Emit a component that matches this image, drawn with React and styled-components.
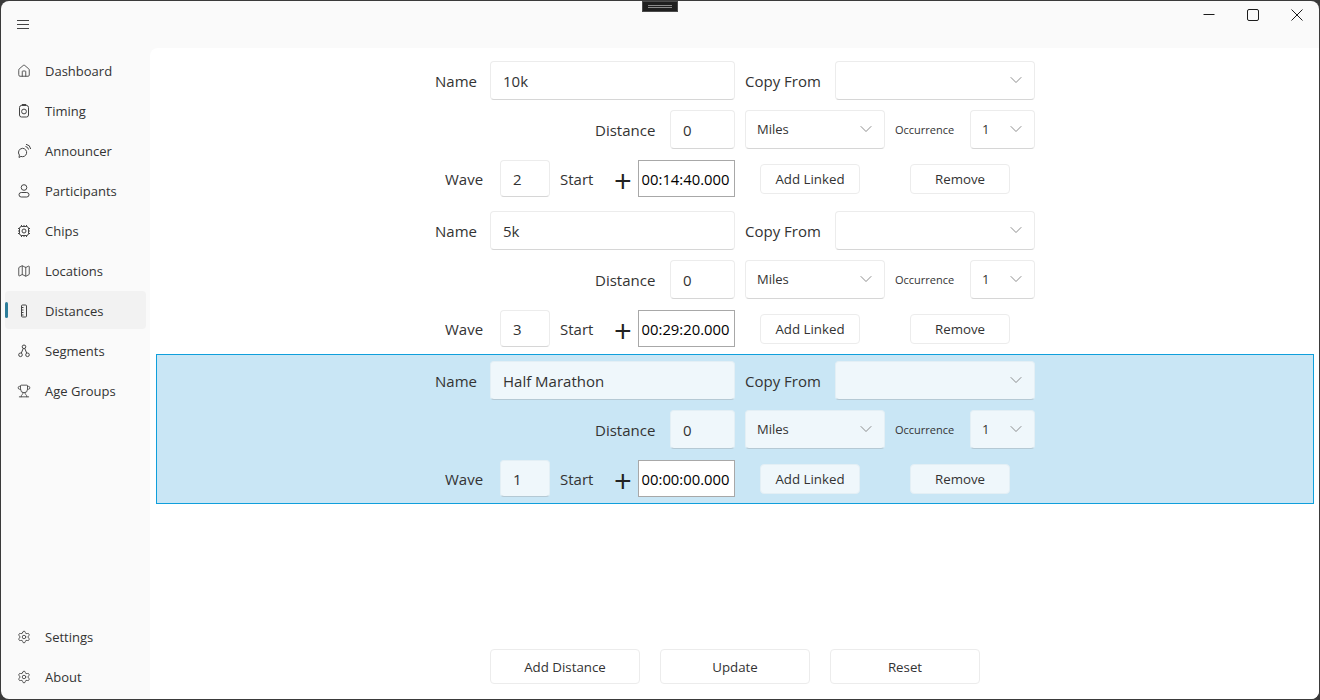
import React from "react";
import styled, { createGlobalStyle } from "styled-components";
import { ChevronDown, Home, Map, Trophy, Settings } from "lucide-react";

const Global = createGlobalStyle`
  html, body {
    margin: 0;
    height: 100%;
    background: #3a3a3a;
  }
  * {
    box-sizing: border-box;
  }
`;

const Window = styled.div`
  width: 1320px;
  height: 700px;
  padding: 1px;
  background: #3a3a3a;
  font-family: "Open Sans", "Noto Sans", sans-serif;
  color: #1f1f1f;
`;

const Frame = styled.div`
  position: relative;
  height: 100%;
  display: flex;
  background: #fafafa;
  border-radius: 8px;
  overflow: hidden;
`;

const Sidebar = styled.nav`
  width: 149px;
  flex: none;
  display: flex;
  flex-direction: column;
  padding: 9px 4px 2px 4px;
`;

const MenuButton = styled.div`
  height: 28px;
  margin: 0 0 13px 10px;
  display: flex;
  align-items: center;
`;

const NavItem = styled.div`
  position: relative;
  height: 38px;
  margin-bottom: 2px;
  padding: 2px 0 0 11px;
  display: flex;
  align-items: center;
  gap: 13px;
  border-radius: 4px;
  font-size: 13px;
  color: #333;
  background: ${(p) => (p.$active ? "#f2f2f2" : "transparent")};

  &::before {
    content: "";
    display: ${(p) => (p.$active ? "block" : "none")};
    position: absolute;
    left: 0;
    top: 11px;
    width: 3px;
    height: 16px;
    border-radius: 2px;
    background: #2d7d9a;
  }
`;

const NavFooter = styled.div`
  margin-top: auto;
`;

const IconSlot = styled.span`
  width: 16px;
  height: 16px;
  flex: none;
  display: flex;
  align-items: center;
  justify-content: center;
  color: #444;
`;

const NavIcon = styled.svg`
  width: 16px;
  height: 16px;
  fill: none;
  stroke: #444;
  stroke-width: 1;
`;

const Content = styled.main`
  flex: 1;
  min-width: 0;
  margin-top: 47px;
  padding: 6px 5px 0 6px;
  display: flex;
  flex-direction: column;
  background: #fff;
  border-top-left-radius: 8px;
`;

const DistanceBlock = styled.section`
  height: 150px;
  flex: none;
  display: flex;
  flex-direction: column;
  align-items: center;
  padding-top: 6px;
  border: 1px solid ${(p) => (p.$selected ? "#0f9fdc" : "transparent")};
  background: ${(p) => (p.$selected ? "#c9e6f5" : "transparent")};
`;

const NameRow = styled.div`
  width: 600px;
  height: 39px;
  display: grid;
  grid-template-columns: 55px 245px 10px 90px 200px;
  align-items: center;
`;

const MeasureRow = styled.div`
  width: 600px;
  height: 39px;
  margin: 10px 0 1px;
  display: grid;
  grid-template-columns: 160px 75px 65px 10px 140px 10px 75px 65px;
  align-items: center;
`;

const WaveRow = styled.div`
  width: 600px;
  height: 37px;
  margin-top: 10px;
  display: grid;
  grid-template-columns: 10px 55px 50px 10px 54px 24px 97px 25px 100px 50px 100px;
  align-items: center;
`;

const Label = styled.span`
  font-size: ${(p) => (p.$small ? "11px" : "15px")};
  color: #333;
  white-space: nowrap;
`;

const Plus = styled.span`
  height: 24px;
  font-size: 31px;
  line-height: 24px;
  color: #222;
  margin-top: 4px;
`;

const Field = styled.div`
  height: ${(p) => p.$h || 39}px;
  padding: 1px 12px 0;
  display: flex;
  align-items: center;
  font-size: 15px;
  color: #333;
  background: ${(p) => (p.$selected ? "#eff7fb" : "#fff")};
  border: 1px solid ${(p) => (p.$selected ? "#e3eff5" : "#ececec")};
  border-bottom-color: ${(p) => (p.$selected ? "#b5c9d4" : "#d6d6d6")};
  border-radius: 4px;
`;

const Select = styled.div`
  height: 39px;
  padding: 0 8px 2px 11px;
  display: flex;
  align-items: center;
  justify-content: space-between;
  font-size: 13px;
  color: #333;
  background: ${(p) => (p.$selected ? "#eff7fb" : "#fff")};
  border: 1px solid ${(p) => (p.$selected ? "#e3eff5" : "#ececec")};
  border-bottom-color: ${(p) => (p.$selected ? "#b5c9d4" : "#d6d6d6")};
  border-radius: 4px;

  svg {
    color: #777;
    flex: none;
  }
`;

const TimeBox = styled.div`
  height: 37px;
  padding-right: 2px;
  display: flex;
  align-items: center;
  justify-content: center;
  font-size: 14.8px;
  color: #000;
  background: #fff;
  border: 1px solid #a8a8a8;
`;

const Button = styled.div`
  width: ${(p) => p.$w || 100}px;
  height: ${(p) => p.$h || 30}px;
  display: flex;
  align-items: center;
  justify-content: center;
  font-size: 13.3px;
  color: #333;
  background: ${(p) => (p.$selected ? "#eff7fb" : "#fff")};
  border: 1px solid ${(p) => (p.$selected ? "#e3eff5" : "#ececec")};
  border-radius: 4px;
`;

const Actions = styled.div`
  margin-top: auto;
  margin-bottom: 15px;
  display: flex;
  justify-content: center;
  gap: 20px;
`;

const Caption = styled.div`
  position: absolute;
  top: 0;
  right: 0;
  height: 28px;
  display: flex;
  align-items: center;
`;

const CaptionButton = styled.div`
  width: 44px;
  height: 28px;
  display: flex;
  align-items: center;
  justify-content: center;
`;

const CaptionIcon = styled.svg`
  width: 12px;
  height: 12px;
  fill: none;
  stroke: #1c1c1c;
  stroke-width: 1;
`;

const Grip = styled.div`
  position: absolute;
  top: 0;
  left: 641px;
  width: 36px;
  height: 11px;
  display: flex;
  flex-direction: column;
  align-items: center;
  justify-content: center;
  gap: 1px;
  background: #1e1e1e;
  border: 1px solid #4a4a4a;

  &::before,
  &::after {
    content: "";
    width: 24px;
    height: 1px;
    background: #8a8a8a;
  }
`;

const Timing = () => (
  <NavIcon viewBox="0 0 16 16">
    <rect x="3.5" y="2.5" width="9" height="11.5" rx="2" />
    <path d="M6 2.5V1.5h4v1" />
    <circle cx="8" cy="8.5" r="2.4" />
  </NavIcon>
);

const Announcer = () => (
  <NavIcon viewBox="0 0 16 16">
    <path d="M6.5 5.3a4.2 4.2 0 1 1-1.6 8.1L3 14.5l.4-2.4A4.2 4.2 0 0 1 6.5 5.3z" />
    <path d="M9.5 3.5a3.5 3.5 0 0 1 3 3M10 1.3a5.5 5.5 0 0 1 4.7 4.7" />
  </NavIcon>
);

const Participant = () => (
  <NavIcon viewBox="0 0 16 16">
    <circle cx="8" cy="4.5" r="2.8" />
    <rect x="3" y="9.5" width="10" height="4.5" rx="2.25" />
  </NavIcon>
);

const Chip = () => (
  <NavIcon viewBox="0 0 16 16">
    <rect x="3.5" y="3.5" width="9" height="9" rx="2" />
    <circle cx="8" cy="8" r="2" />
    <path d="M2 5.5h1.5M2 8h1.5M2 10.5h1.5M12.5 5.5H14M12.5 8H14M12.5 10.5H14M5.5 2v1.5M8 2v1.5M10.5 2v1.5M5.5 12.5V14M8 12.5V14M10.5 12.5V14" />
  </NavIcon>
);

const Ruler = () => (
  <NavIcon viewBox="0 0 16 16">
    <rect x="5.5" y="2" width="5" height="12" rx="1" />
    <path d="M5.5 4.5h2M5.5 7h2M5.5 9.5h2M5.5 12h2" />
  </NavIcon>
);

const SegmentsIcon = () => (
  <NavIcon viewBox="0 0 16 16">
    <circle cx="8" cy="3.8" r="1.8" />
    <circle cx="4.5" cy="11.8" r="1.8" />
    <circle cx="11.5" cy="11.8" r="1.8" />
    <path d="M7.2 5.5 5.3 10.1M8.8 5.5l1.9 4.6" />
  </NavIcon>
);

const LucideNav = ({ icon: Icon }) => <Icon size={14} strokeWidth={1.5} />;

const NAV = [
  { label: "Dashboard", icon: <LucideNav icon={Home} /> },
  { label: "Timing", icon: <Timing /> },
  { label: "Announcer", icon: <Announcer /> },
  { label: "Participants", icon: <Participant /> },
  { label: "Chips", icon: <Chip /> },
  { label: "Locations", icon: <LucideNav icon={Map} /> },
  { label: "Distances", icon: <Ruler />, active: true },
  { label: "Segments", icon: <SegmentsIcon /> },
  { label: "Age Groups", icon: <LucideNav icon={Trophy} /> },
];

const DISTANCES = [
  { name: "10k", wave: "2", start: "00:14:40.000" },
  { name: "5k", wave: "3", start: "00:29:20.000" },
  { name: "Half Marathon", wave: "1", start: "00:00:00.000", selected: true },
];

const Chevron = () => <ChevronDown size={20} strokeWidth={1} />;

const Distance = ({ name, wave, start, selected }) => (
  <DistanceBlock $selected={selected}>
    <NameRow>
      <Label>Name</Label>
      <Field $selected={selected}>{name}</Field>
      <span />
      <Label>Copy From</Label>
      <Select $selected={selected}>
        <span />
        <Chevron />
      </Select>
    </NameRow>
    <MeasureRow>
      <span />
      <Label>Distance</Label>
      <Field $selected={selected}>0</Field>
      <span />
      <Select $selected={selected}>
        Miles
        <Chevron />
      </Select>
      <span />
      <Label $small>Occurrence</Label>
      <Select $selected={selected}>
        1
        <Chevron />
      </Select>
    </MeasureRow>
    <WaveRow>
      <span />
      <Label>Wave</Label>
      <Field $selected={selected} $h={37}>
        {wave}
      </Field>
      <span />
      <Label>Start</Label>
      <Plus>+</Plus>
      <TimeBox>{start}</TimeBox>
      <span />
      <Button $selected={selected}>Add Linked</Button>
      <span />
      <Button $selected={selected}>Remove</Button>
    </WaveRow>
  </DistanceBlock>
);

const App = () => {
  return (
    <Window>
      <Global />
      <Frame>
        <Grip />
        <Sidebar>
          <MenuButton>
            <NavIcon viewBox="0 0 16 16">
              <path d="M2 4.5h12M2 8.5h12M2 12.5h12" />
            </NavIcon>
          </MenuButton>
          {NAV.map((item) => (
            <NavItem key={item.label} $active={item.active}>
              <IconSlot>{item.icon}</IconSlot>
              {item.label}
            </NavItem>
          ))}
          <NavFooter>
            <NavItem>
              <IconSlot>
                <LucideNav icon={Settings} />
              </IconSlot>
              Settings
            </NavItem>
            <NavItem>
              <IconSlot>
                <LucideNav icon={Settings} />
              </IconSlot>
              About
            </NavItem>
          </NavFooter>
        </Sidebar>
        <Content>
          {DISTANCES.map((d) => (
            <Distance key={d.name} {...d} />
          ))}
          <Actions>
            <Button $w={150} $h={35}>Add Distance</Button>
            <Button $w={150} $h={35}>Update</Button>
            <Button $w={150} $h={35}>Reset</Button>
          </Actions>
        </Content>
        <Caption>
          <CaptionButton>
            <CaptionIcon viewBox="0 0 12 12">
              <path d="M0.5 5.5h11" />
            </CaptionIcon>
          </CaptionButton>
          <CaptionButton>
            <CaptionIcon viewBox="0 0 12 12">
              <rect x="0.5" y="0.5" width="11" height="11" rx="1.5" />
            </CaptionIcon>
          </CaptionButton>
          <CaptionButton>
            <CaptionIcon viewBox="0 0 12 12">
              <path d="M0.5 0.5l11 11M11.5 0.5l-11 11" />
            </CaptionIcon>
          </CaptionButton>
        </Caption>
      </Frame>
    </Window>
  );
};

export default App;
